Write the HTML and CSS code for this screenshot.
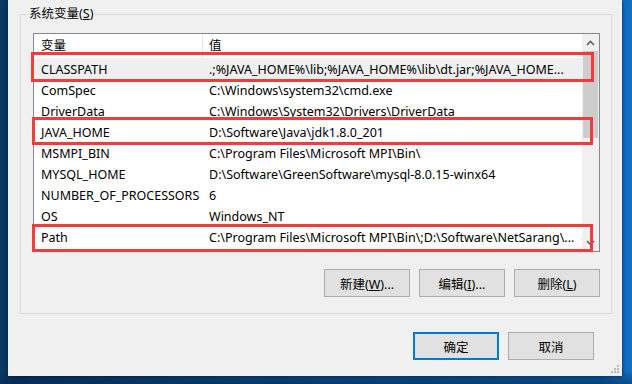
FILE: index.html
```html
<!DOCTYPE html>
<html lang="zh-CN">
<head>
<meta charset="utf-8">
<title>系统变量</title>
<link rel="stylesheet" href="styles.css">
</head>
<body>
<div class="desk">
  <div class="dialog">
    <fieldset class="group">
      <legend>系统变量(<u>S</u>)</legend>
      <div class="list">
        <div class="list-main">
          <div class="hdr">
            <div class="c1">变量</div>
            <div class="c2">值</div>
          </div>
          <div class="row sel">
            <div class="c1">CLASSPATH</div>
            <div class="c2">.;%JAVA_HOME%\lib;%JAVA_HOME%\lib\dt.jar;%JAVA_HOME...</div>
            <span class="mark m1"></span>
          </div>
          <div class="row">
            <div class="c1">ComSpec</div>
            <div class="c2">C:\Windows\system32\cmd.exe</div>
          </div>
          <div class="row">
            <div class="c1">DriverData</div>
            <div class="c2">C:\Windows\System32\Drivers\DriverData</div>
          </div>
          <div class="row">
            <div class="c1">JAVA_HOME</div>
            <div class="c2">D:\Software\Java\jdk1.8.0_201</div>
            <span class="mark m2"></span>
          </div>
          <div class="row">
            <div class="c1">MSMPI_BIN</div>
            <div class="c2">C:\Program Files\Microsoft MPI\Bin\</div>
          </div>
          <div class="row">
            <div class="c1">MYSQL_HOME</div>
            <div class="c2">D:\Software\GreenSoftware\mysql-8.0.15-winx64</div>
          </div>
          <div class="row">
            <div class="c1">NUMBER_OF_PROCESSORS</div>
            <div class="c2">6</div>
          </div>
          <div class="row">
            <div class="c1">OS</div>
            <div class="c2">Windows_NT</div>
          </div>
          <div class="row">
            <div class="c1">Path</div>
            <div class="c2">C:\Program Files\Microsoft MPI\Bin\;D:\Software\NetSarang\...</div>
            <span class="mark m3"></span>
          </div>
        </div>
        <div class="vscroll">
          <div class="sbtn">
            <svg width="9" height="6" viewBox="0 0 9 6"><path d="M1 5 L4.5 1.5 L8 5" fill="none" stroke="#606060" stroke-width="1.6"/></svg>
          </div>
          <div class="thumb"></div>
          <div class="track"></div>
          <div class="sbtn">
            <svg width="9" height="6" viewBox="0 0 9 6"><path d="M1 1 L4.5 4.5 L8 1" fill="none" stroke="#606060" stroke-width="1.6"/></svg>
          </div>
        </div>
      </div>
      <div class="btns">
        <button class="btn">新建(<u>W</u>)...</button>
        <button class="btn">编辑(<u>I</u>)...</button>
        <button class="btn">删除(<u>L</u>)</button>
      </div>
    </fieldset>
    <div class="footer">
      <button class="btn default">确定</button>
      <button class="btn">取消</button>
    </div>
    <svg class="grip" width="9" height="9" viewBox="0 0 9 9">
      <rect x="6" y="0" width="2" height="2" fill="#b9b9b9"/>
      <rect x="3" y="3" width="2" height="2" fill="#b9b9b9"/>
      <rect x="6" y="3" width="2" height="2" fill="#b9b9b9"/>
      <rect x="0" y="6" width="2" height="2" fill="#b9b9b9"/>
      <rect x="3" y="6" width="2" height="2" fill="#b9b9b9"/>
      <rect x="6" y="6" width="2" height="2" fill="#b9b9b9"/>
    </svg>
  </div>
</div>
</body>
</html>
```
FILE: styles.css
```css
* { box-sizing: border-box; }
html, body { margin: 0; padding: 0; }
body {
  width: 632px;
  height: 384px;
  overflow: hidden;
  font-family: "Noto Sans", "Noto Sans CJK SC", sans-serif;
  font-size: 12.5px;
  color: #000;
}
.desk {
  width: 632px;
  height: 384px;
  padding-left: 8px;
  background:
    linear-gradient(180deg, rgba(0,0,0,0) 0, rgba(0,0,0,0) 370px, rgba(4,40,80,0.5) 384px),
    linear-gradient(90deg, #0b3a68 0, #08305a 8px, #0a4a86 300px, #0b5aa2 600px, #1370c4 632px);
}
.dialog {
  position: relative;
  width: 614px;
  height: 376px;
  background: #f0f0f0;
  box-shadow: 1px 1px 3px rgba(0,0,0,0.35);
  display: flex;
  flex-direction: column;
}
.group {
  margin: 5px 0 0 12px;
  width: 592px;
  border: 1px solid #dcdcdc;
  padding: 10px 11px 16px 12px;
  min-width: 0;
}
.group legend {
  padding: 0 2px;
  margin-left: -6px;
  line-height: 18px;
  height: 18px;
}
u { text-decoration: underline; text-underline-offset: 1px; }
.list {
  display: flex;
  width: 567px;
  height: 219px;
  border: 1px solid #828790;
  background: #fff;
}
.list-main {
  flex: 1;
  display: flex;
  flex-direction: column;
  min-width: 0;
}
.hdr, .row {
  display: flex;
  align-items: center;
  position: relative;
  white-space: nowrap;
}
.hdr { height: 24px; }
.row { height: 21px; padding-top: 1px; }
.c1 {
  width: 168px;
  flex: none;
  padding-left: 7px;
  overflow: hidden;
}
.c2 {
  flex: 1;
  padding-left: 7px;
  overflow: hidden;
  min-width: 0;
}
.hdr .c2 { border-left: 1px solid #e5e5e5; height: 24px; line-height: 24px; padding-left: 6px; }
.hdr .c1 { height: 24px; line-height: 24px; }
.row.sel { background: #efefef; }
.mark {
  position: absolute;
  border: 3px solid #f43b3b;
  pointer-events: none;
}
.m1 { left: -3px; right: -12px; top: -6px; bottom: -3px; }
.m2 { left: -2px; right: -11px; top: -4px; bottom: -3px; }
.m3 { left: -2px; right: -11px; top: -2px; bottom: -5px; }
.vscroll {
  width: 17px;
  flex: none;
  background: #f0f0f0;
  display: flex;
  flex-direction: column;
}
.sbtn {
  height: 17px;
  display: flex;
  align-items: center;
  justify-content: center;
}
.thumb {
  height: 87px;
  margin: 0 1px 0 1px;
  background: #cdcdcd;
}
.track { flex: 1; }
.btns {
  display: flex;
  justify-content: flex-end;
  gap: 9px;
  margin-top: 17px;
}
.btn {
  width: 86px;
  height: 28px;
  background: #e1e1e1;
  border: 1px solid #adadad;
  font-family: "Noto Sans", "Noto Sans CJK SC", sans-serif;
  font-size: 12.5px;
  color: #000;
  padding: 0;
}
.btn.default { border: 2px solid #0078d7; }
.footer {
  display: flex;
  justify-content: flex-end;
  gap: 9px;
  margin-top: 18px;
  padding-right: 28px;
}
.grip {
  position: absolute;
  right: 2px;
  bottom: 2px;
}
```
